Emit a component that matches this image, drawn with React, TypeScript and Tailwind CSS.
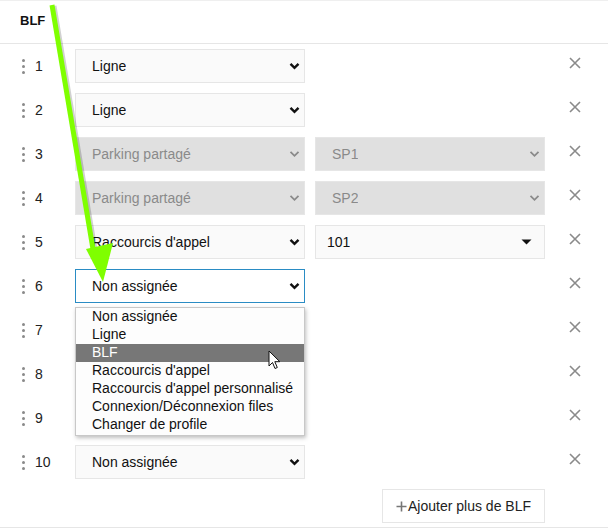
import React from 'react';

type Row = {
  n: number;
  value: string;
  second?: string;
  disabled?: boolean;
  focused?: boolean;
  caret?: boolean;
};

const rows: Row[] = [
  { n: 1, value: 'Ligne' },
  { n: 2, value: 'Ligne' },
  { n: 3, value: 'Parking partagé', second: 'SP1', disabled: true },
  { n: 4, value: 'Parking partagé', second: 'SP2', disabled: true },
  { n: 5, value: "Raccourcis d'appel", second: '101', caret: true },
  { n: 6, value: 'Non assignée', focused: true },
  { n: 7, value: 'Non assignée' },
  { n: 8, value: 'Non assignée' },
  { n: 9, value: 'Non assignée' },
  { n: 10, value: 'Non assignée' },
];

const options = [
  'Non assignée',
  'Ligne',
  'BLF',
  "Raccourcis d'appel",
  "Raccourcis d'appel personnalisé",
  'Connexion/Déconnexion files',
  'Changer de profile',
];

function Chevron({ muted }: { muted?: boolean }) {
  return (
    <svg width="11" height="8" viewBox="0 0 11 8" className="shrink-0">
      <path
        d="M1.5 1.8 L5.5 5.8 L9.5 1.8"
        fill="none"
        stroke={muted ? '#8a8a8a' : '#111'}
        strokeWidth={muted ? 1.8 : 2.4}
      />
    </svg>
  );
}

function Caret() {
  return (
    <svg width="11" height="6" viewBox="0 0 11 6" className="shrink-0">
      <path d="M0.5 0.5 H10.5 L5.5 5.5 Z" fill="#111" />
    </svg>
  );
}

function Select({
  value,
  disabled,
  focused,
  caret,
}: {
  value: string;
  disabled?: boolean;
  focused?: boolean;
  caret?: boolean;
}) {
  return (
    <div
      className={
        'w-[230px] h-[34px] flex items-center justify-between border ' +
        (caret ? 'pl-[11px] pr-[12px] ' : 'pl-[16px] pr-[4px] ') +
        (disabled
          ? 'bg-[#e0e0e0] border-[#e6e6e6] text-[#8a8a8a]'
          : focused
            ? 'bg-white border-[#2a8cc4] text-[#111]'
            : 'bg-[#fafafa] border-[#e6e6e6] text-[#111]')
      }
    >
      <span className="truncate">{value}</span>
      {caret ? <Caret /> : <Chevron muted={disabled} />}
    </div>
  );
}

function Handle() {
  return (
    <div className="flex flex-col gap-[3px] w-[3px]">
      <span className="w-[3px] h-[3px] rounded-full bg-[#8a8a8a]" />
      <span className="w-[3px] h-[3px] rounded-full bg-[#8a8a8a]" />
      <span className="w-[3px] h-[3px] rounded-full bg-[#8a8a8a]" />
    </div>
  );
}

function Close() {
  return (
    <svg width="12" height="12" viewBox="0 0 12 12" className="-mt-[6px]">
      <path d="M1 1 L11 11 M11 1 L1 11" stroke="#8a8a8a" strokeWidth="1.6" />
    </svg>
  );
}

export default function App() {
  return (
    <div
      className="relative w-[608px] h-[531px] bg-white overflow-hidden border-t border-[#efefef] text-[14px]"
      style={{ fontFamily: '"Liberation Sans", Arial, sans-serif' }}
    >
      {/* Header */}
      <div className="h-[43px] border-b border-[#e6e6e6] flex items-center pl-[20px] pb-[2px]">
        <span className="font-bold text-[13px] text-[#111]">BLF</span>
      </div>

      {/* Rows */}
      <div className="flex flex-col">
        {rows.map(r => (
          <div key={r.n} className="h-[44px] flex items-center">
            <div className="w-[75px] flex items-center pl-[22px] gap-[10px]">
              <Handle />
              <span className="text-[#222]">{r.n}</span>
            </div>
            <Select value={r.value} disabled={r.disabled} focused={r.focused} />
            <div className="w-[10px]" />
            {r.second ? (
              <Select value={r.second} disabled={r.disabled} caret={r.caret} />
            ) : (
              <div className="w-[230px]" />
            )}
            <div className="flex-1 flex justify-center pr-[3px]">
              <Close />
            </div>
          </div>
        ))}
      </div>

      {/* Add button */}
      <div className="flex justify-end pr-[63px] pt-[5px]">
        <button className="h-[34px] px-[13px] flex items-center gap-[1px] border border-[#e6e6e6] bg-white text-[#222]">
          <svg width="11" height="11" viewBox="0 0 11 11">
            <path d="M5.5 0.5 V10.5 M0.5 5.5 H10.5" stroke="#777" strokeWidth="1.6" />
          </svg>
          <span>Ajouter plus de BLF</span>
        </button>
      </div>
      <div className="mt-[4px] border-t border-[#e6e6e6]" />

      {/* Dropdown menu */}
      <div className="absolute left-[75px] top-[306px] w-[230px] bg-[#fdfdfd] border border-[#c8c8c8] shadow-[1px_2px_4px_rgba(0,0,0,0.25)] pb-[1px]">
        {options.map(o => (
          <div
            key={o}
            className={
              'h-[18px] leading-[17px] pl-[16px] ' +
              (o === 'BLF' ? 'bg-[#777777] text-white' : 'text-[#111]')
            }
          >
            {o}
          </div>
        ))}
      </div>

      {/* Mouse cursor */}
      <svg
        className="absolute left-[268px] top-[349px]"
        width="14"
        height="20"
        viewBox="0 0 14 20"
      >
        <path
          d="M1 1 V16 L4.5 12.5 L7 18.5 L9.3 17.5 L6.8 11.7 H11.8 Z"
          fill="#fff"
          stroke="#111"
          strokeWidth="1"
          strokeLinejoin="round"
        />
      </svg>

      {/* Annotation arrow */}
      <svg
        className="absolute left-0 top-0 pointer-events-none"
        width="608"
        height="531"
        viewBox="0 0 608 531"
      >
        <line x1="54" y1="5" x2="96" y2="255" stroke="rgba(0,0,0,0.18)" strokeWidth="5" />
        <line x1="52" y1="4" x2="94" y2="254" stroke="#7fff00" strokeWidth="5" />
        <path d="M86 248 L113 242 L103 281 Z" fill="#7fff00" />
      </svg>
    </div>
  );
}
